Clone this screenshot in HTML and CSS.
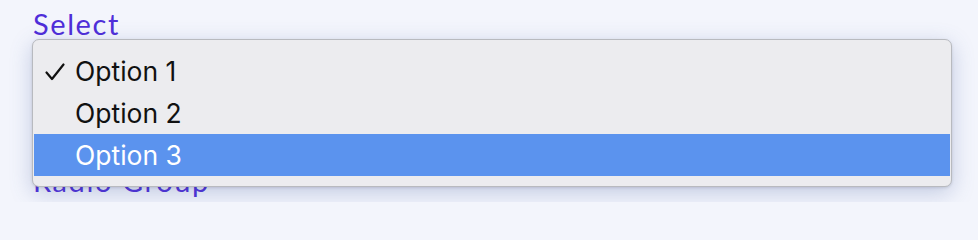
FILE: index.html
```html
<!DOCTYPE html>
<html lang="en">
<head>
<meta charset="utf-8">
<title>Select</title>
<link rel="stylesheet" href="styles.css">
</head>
<body>
<div class="page">
  <div class="field">
    <div class="field-label">Select</div>
    <div class="select-control"></div>
  </div>
  <div class="field">
    <div class="field-label">Radio Group</div>
  </div>
  <div class="menu" role="listbox">
    <div class="option selected" role="option">
      <svg class="check" width="20" height="18" viewBox="0 0 20 18" aria-hidden="true">
        <path d="M1.5 9.5 L7 16 L18.5 1.5" fill="none" stroke="#111" stroke-width="2.2" stroke-linecap="round" stroke-linejoin="round"/>
      </svg>
      <span>Option 1</span>
    </div>
    <div class="option" role="option"><span>Option 2</span></div>
    <div class="option active" role="option"><span>Option 3</span></div>
  </div>
</div>
</body>
</html>
```

FILE: styles.css
```css
html, body {
  margin: 0;
  padding: 0;
}

body {
  background: #f3f5fc;
  width: 978px;
  height: 202px;
  overflow: hidden;
}

.page {
  position: relative;
  padding: 4px 33px 0;
}

.field-label {
  font-family: "Lato", "Open Sans", sans-serif;
  font-size: 29px;
  line-height: 40px;
  letter-spacing: 1.6px;
  color: #4f2ed9;
}

.select-control {
  height: 117px;
}

.menu {
  position: absolute;
  top: 39px;
  left: 32px;
  width: 916px;
  padding: 10px 1px;
  background: #ececef;
  border: 1px solid #b8babf;
  border-radius: 7px;
  box-shadow: 0 6px 22px rgba(70, 95, 160, 0.28), 0 1px 3px rgba(0, 0, 0, 0.12);
}

.option {
  position: relative;
  display: flex;
  align-items: center;
  height: 42px;
  padding-left: 41px;
  font-family: "Inter", "Noto Sans", sans-serif;
  font-size: 26.5px;
  color: #111;
}

.option.active {
  background: #5b93ee;
  color: #fff;
}

.check {
  position: absolute;
  left: 11px;
  top: 13px;
}
```
